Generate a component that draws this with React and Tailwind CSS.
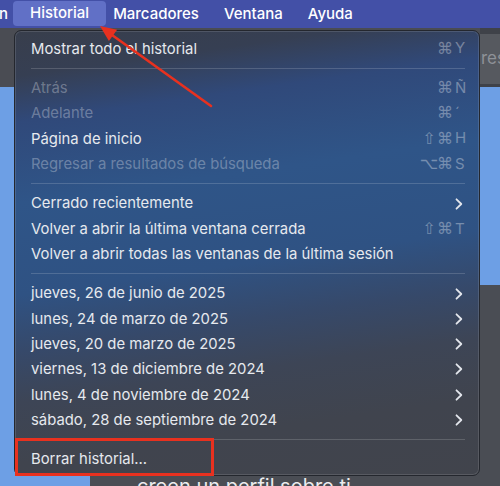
import React from "react";

const FONT = { fontFamily: "Inter, 'DejaVu Sans', sans-serif" };

function Chevron() {
  return (
    <svg width="8" height="12" viewBox="0 0 8 12" className="mr-[3px]">
      <polyline points="1.5,1.3 6.3,6 1.5,10.7" fill="none" stroke="#e3e6ec" strokeWidth="1.8" strokeLinecap="round" strokeLinejoin="round" />
    </svg>
  );
}

function Shortcut({ mods = [], k }) {
  return (
    <div className="flex items-center gap-[4px] text-[rgba(255,255,255,0.34)] text-[15px]">
      {mods.map((m, i) => (
        <span key={i} className="w-[12px] flex justify-center text-[16px] leading-none" style={{ fontFamily: "'DejaVu Sans', sans-serif" }}>{m}</span>
      ))}
      <span className="w-[11px] text-left">{k}</span>
    </div>
  );
}

function Row({ label, disabled, shortcut, chevron }) {
  return (
    <div className="h-[25.3px] flex items-center justify-between pl-[16px] pr-[13px]">
      <span className={disabled ? "text-[rgba(255,255,255,0.3)]" : "text-[#e6e9ee]"}>{label}</span>
      {shortcut}
      {chevron && <Chevron />}
    </div>
  );
}

function Sep() {
  return (
    <div className="h-[14.2px] flex items-center pl-[16px] pr-[14px]">
      <div className="h-px w-full bg-[rgba(255,255,255,0.16)]" />
    </div>
  );
}

export default function App() {
  const dates = [
    "jueves, 26 de junio de 2025",
    "lunes, 24 de marzo de 2025",
    "jueves, 20 de marzo de 2025",
    "viernes, 13 de diciembre de 2024",
    "lunes, 4 de noviembre de 2024",
    "sábado, 28 de septiembre de 2024",
  ];
  return (
    <div className="relative w-[500px] h-[486px] overflow-hidden bg-[#6d9fe5]" style={FONT}>
      {/* menu bar */}
      <div className="h-[28px] bg-[#4350a7] flex items-center text-white text-[15px] font-medium">
        <span className="-ml-[1px] w-[14px]">n</span>
        <span className="h-[25px] mt-[-2px] px-[17px] flex items-center rounded-[4px] bg-[#6170c6]">Historial</span>
        <span className="ml-[7px]">Marcadores</span>
        <span className="ml-[25px]">Ventana</span>
        <span className="ml-[25px]">Ayuda</span>
      </div>
      {/* background page */}
      <div className="h-[59px] flex">
        <div className="flex-1 bg-[#4a4c53]" />
        <div className="w-[20px] flex flex-col">
          <div className="h-[6px] bg-[#3f4249]" />
          <div className="h-[50px] bg-[#56595f] flex items-center overflow-hidden">
            <span className="text-[17px] text-[#8e9197] pl-[1px] whitespace-nowrap">res</span>
          </div>
          <div className="flex-1 bg-[#3f4249]" />
        </div>
      </div>
      <div className="h-[198px]" />
      <div className="h-[201px] flex">
        <div className="w-[90px]" />
        <div className="flex-1 bg-[#4a4d54] pt-[190px] pl-[47px]">
          <span className="text-[20px] leading-[20px] text-[#ececee] whitespace-nowrap">creen un perfil sobre ti</span>
        </div>
      </div>

      {/* dropdown menu */}
      <div className="absolute left-[14px] top-[30px] w-[466px] h-[446px] rounded-[7px] border border-[#24272e] shadow-[inset_0_0_0_1px_rgba(255,255,255,0.12)] bg-[linear-gradient(172deg,#383e4c_0%,#363f53_9%,#30497a_18%,#2f5588_34%,#2f5283_52%,#36496a_63%,#3d4556_73%,#40444e_85%,#41444c_100%)] pt-[5px] text-[14.85px]">
        <Row label="Mostrar todo el historial" shortcut={<Shortcut mods={["⌘"]} k="Y" />} />
        <Sep />
        <Row label="Atrás" disabled shortcut={<Shortcut mods={["⌘"]} k="Ñ" />} />
        <Row label="Adelante" disabled shortcut={<Shortcut mods={["⌘"]} k="´" />} />
        <Row label="Página de inicio" shortcut={<Shortcut mods={["⇧", "⌘"]} k="H" />} />
        <Row label="Regresar a resultados de búsqueda" disabled shortcut={<Shortcut mods={["⌥", "⌘"]} k="S" />} />
        <Sep />
        <Row label="Cerrado recientemente" chevron />
        <Row label="Volver a abrir la última ventana cerrada" shortcut={<Shortcut mods={["⇧", "⌘"]} k="T" />} />
        <Row label="Volver a abrir todas las ventanas de la última sesión" />
        <Sep />
        {dates.map((d) => (
          <Row key={d} label={d} chevron />
        ))}
        <Sep />
        <Row label="Borrar historial..." />
      </div>

      {/* annotations */}
      <div className="absolute left-[15px] top-[438px] w-[199px] h-[38px] border-[3px] border-[#e8311f]" />
      <svg className="absolute left-0 top-0" width="500" height="486" viewBox="0 0 500 486">
        <line x1="112" y1="35" x2="211" y2="106" stroke="#e8311f" strokeWidth="2.6" strokeLinecap="round" />
        <polygon points="100,26 108.9,41.1 117.1,29.7" fill="#e8311f" />
      </svg>
    </div>
  );
}
